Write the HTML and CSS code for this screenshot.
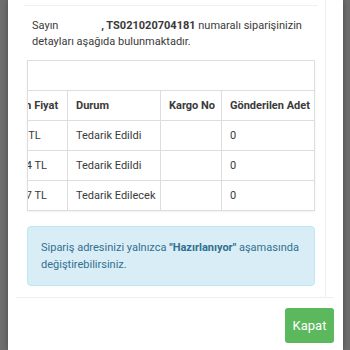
FILE: index.html
```html
<!DOCTYPE html>
<html lang="tr">
<head>
  <meta charset="UTF-8">
  <title>Sipariş Detayı</title>
  <link rel="stylesheet" href="styles.css">
</head>
<body>
  <div class="modal">
    <div class="modal-body">
      <div class="top-strip"></div>

      <p class="intro">
        Sayın <span class="hidden-name"></span><b>, TS021020704181</b> numaralı siparişinizin
        detayları aşağıda bulunmaktadır.
      </p>

      <div class="table-wrap">
        <table class="orders">
          <colgroup>
            <col class="c-price">
            <col class="c-status">
            <col class="c-cargo">
            <col class="c-sent">
          </colgroup>
          <thead>
            <tr class="empty-row"><td colspan="4"></td></tr>
            <tr>
              <th>Birim Fiyat</th>
              <th>Durum</th>
              <th>Kargo No</th>
              <th>Gönderilen Adet</th>
            </tr>
          </thead>
          <tbody>
            <tr>
              <td>9,90 TL</td>
              <td>Tedarik Edildi</td>
              <td></td>
              <td>0</td>
            </tr>
            <tr>
              <td>12,54 TL</td>
              <td>Tedarik Edildi</td>
              <td></td>
              <td>0</td>
            </tr>
            <tr>
              <td>29,97 TL</td>
              <td>Tedarik Edilecek</td>
              <td></td>
              <td>0</td>
            </tr>
          </tbody>
        </table>
      </div>

      <div class="alert">
        Sipariş adresinizi yalnızca <b>"Hazırlanıyor"</b> aşamasında değiştirebilirsiniz.
      </div>
    </div>

    <div class="modal-footer">
      <button class="btn-close">Kapat</button>
    </div>
  </div>
</body>
</html>
```

FILE: styles.css
```css
body {
  margin: 0;
  background: #6e6e6e;
  font-family: Roboto, "Noto Sans", sans-serif;
  font-size: 11px;
  color: #3a3a3a;
  overflow: hidden;
}

.modal {
  margin: 0 7px 0 8px;
  height: 350px;
  background: #fff;
  box-shadow: 0 0 6px rgba(0,0,0,0.35);
  display: flex;
  flex-direction: column;
}

.modal-body {
  height: 297px;
  margin-left: 8px;
  width: 310px;
  border-right: 1px solid #eee;
  box-sizing: border-box;
  padding: 0 10px 0 11px;
}

.top-strip {
  height: 5px;
  border-bottom: 1px solid #f0f0f0;
  margin: 0 -3px 0 -3px;
}

.intro {
  margin: 12px 0 10px 5px;
  line-height: 16px;
}

.hidden-name {
  display: inline-block;
  width: 40px;
}

.table-wrap {
  border: 1px solid #ddd;
  overflow: hidden;
  box-shadow: 0 1px 2px rgba(0,0,0,0.06);
}

.orders {
  border-collapse: collapse;
  table-layout: fixed;
  width: 319px;
  margin-left: -32px;
}

.c-price { width: 71px; }
.c-status { width: 93px; }
.c-cargo { width: 61px; }
.c-sent { width: 94px; }

.orders th,
.orders td {
  height: 29px;
  padding: 0 8px;
  text-align: left;
  white-space: nowrap;
  border-top: 1px solid #ddd;
  border-left: 1px solid #ddd;
}

.orders th {
  font-weight: bold;
}

.orders .empty-row td {
  border-top: none;
  border-left: none;
}

.alert {
  margin-top: 15px;
  padding: 12px 13px;
  line-height: 17px;
  background: #d9edf7;
  border: 1px solid #bce8f1;
  border-radius: 4px;
  color: #31708f;
}

.modal-footer {
  display: flex;
  justify-content: flex-end;
  margin: 0 9px 0 8px;
  padding: 10px 0 7px;
  border-top: 1px solid #eee;
}

.btn-close {
  background: #5cb85c;
  color: #fff;
  border: none;
  border-radius: 3px;
  width: 49px;
  height: 35px;
  font-family: inherit;
  font-size: 13px;
  padding: 0;
}
```
